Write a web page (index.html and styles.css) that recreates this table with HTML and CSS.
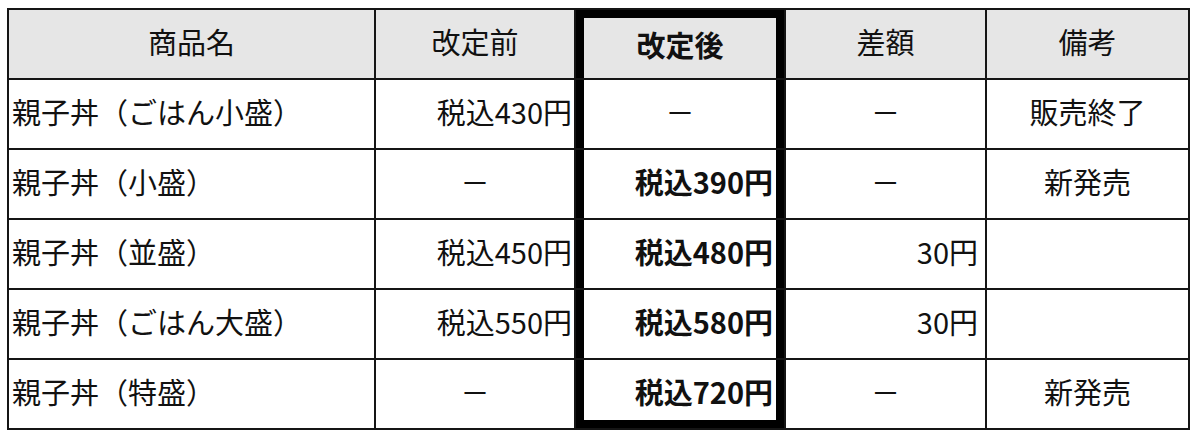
FILE: index.html
```html
<!DOCTYPE html>
<html lang="ja">
<head>
<meta charset="utf-8">
<title>価格改定表</title>
<link rel="stylesheet" href="styles.css">
</head>
<body>
<table class="price-table">
  <thead>
    <tr>
      <th class="c-name">商品名</th>
      <th class="c-before">改定前</th>
      <th class="c-after hl hl-top">改定後</th>
      <th class="c-diff">差額</th>
      <th class="c-note">備考</th>
    </tr>
  </thead>
  <tbody>
    <tr>
      <td class="name">親子丼（ごはん小盛）</td>
      <td class="num">税込430円</td>
      <td class="hl dash">－</td>
      <td class="dash">－</td>
      <td class="center">販売終了</td>
    </tr>
    <tr>
      <td class="name">親子丼（小盛）</td>
      <td class="dash">－</td>
      <td class="hl num bold">税込390円</td>
      <td class="dash">－</td>
      <td class="center">新発売</td>
    </tr>
    <tr>
      <td class="name">親子丼（並盛）</td>
      <td class="num">税込450円</td>
      <td class="hl num bold">税込480円</td>
      <td class="num diff">30円</td>
      <td class="center"></td>
    </tr>
    <tr>
      <td class="name">親子丼（ごはん大盛）</td>
      <td class="num">税込550円</td>
      <td class="hl num bold">税込580円</td>
      <td class="num diff">30円</td>
      <td class="center"></td>
    </tr>
    <tr>
      <td class="name">親子丼（特盛）</td>
      <td class="dash">－</td>
      <td class="hl hl-bottom num bold">税込720円</td>
      <td class="dash">－</td>
      <td class="center">新発売</td>
    </tr>
  </tbody>
</table>
</body>
</html>
```

FILE: styles.css
```css
html, body {
  margin: 0;
  padding: 0;
  background: #ffffff;
}

body {
  padding: 8px 0 0 7px;
  font-family: "Noto Sans CJK JP", sans-serif;
  color: #111111;
}

.price-table {
  border-collapse: separate;
  border-spacing: 0;
  table-layout: fixed;
  border: 2px solid #151515;
  font-size: 29px;
  line-height: 1;
}

.price-table th,
.price-table td {
  box-sizing: border-box;
  height: 70px;
  padding: 0;
  border-right: 2px solid #151515;
  border-bottom: 2px solid #151515;
  vertical-align: middle;
  white-space: nowrap;
  padding-bottom: 6px;
}

.price-table tr > :last-child {
  border-right: none;
}

.price-table tbody tr:last-child td {
  border-bottom: none;
  height: 68px;
}

.price-table th {
  background: #e6e6e6;
  font-weight: normal;
  text-align: center;
}

.c-name { width: 367px; }
.c-before { width: 200px; }
.c-after { width: 210px; }
.c-diff { width: 201px; }
.c-note { width: 201px; }

.price-table th.c-after {
  font-weight: bold;
}

.name {
  text-align: left;
  padding-left: 3px !important;
}

.num {
  text-align: right;
  padding-right: 2px !important;
}

.num.diff {
  padding-right: 7px !important;
}

.dash,
.center {
  text-align: center;
}

.bold {
  font-weight: bold;
}

.hl {
  box-shadow: inset 8px 0 0 #000000, inset -8px 0 0 #000000;
}

.hl.num {
  padding-right: 11px !important;
}

.hl-top {
  box-shadow: inset 8px 0 0 #000000, inset -8px 0 0 #000000, inset 0 8px 0 #000000;
  padding-top: 6px !important;
}

.hl-bottom {
  box-shadow: inset 8px 0 0 #000000, inset -8px 0 0 #000000, inset 0 -8px 0 #000000;
}
```
